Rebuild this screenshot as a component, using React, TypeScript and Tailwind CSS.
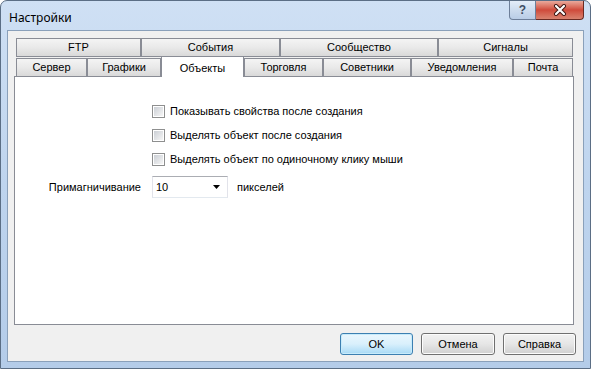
import React from 'react';

const rowOne = [
  { label: 'FTP', w: 'w-[125px]' },
  { label: 'События', w: 'w-[139px]' },
  { label: 'Сообщество', w: 'w-[158px]' },
  { label: 'Сигналы', w: 'w-[135px]' },
];

const rowTwo = [
  { label: 'Сервер', w: 'w-[71px]' },
  { label: 'Графики', w: 'w-[74px]' },
  { label: 'Объекты', w: 'w-[83px]', active: true },
  { label: 'Торговля', w: 'w-[79px]' },
  { label: 'Советники', w: 'w-[88px]' },
  { label: 'Уведомления', w: 'w-[102px]' },
  { label: 'Почта', w: 'w-[60px]' },
];

const options = [
  'Показывать свойства после создания',
  'Выделять объект после создания',
  'Выделять объект по одиночному клику мыши',
];

const Checkbox: React.FC = () => (
  <div className="w-[13px] h-[13px] border border-[#8e8f8f] bg-white p-px">
    <div className="w-full h-full bg-gradient-to-br from-[#cbcfd5] to-[#f6f6f6]" />
  </div>
);

const App: React.FC = () => {
  return (
    <div
      className="w-[591px] h-[369px] overflow-hidden bg-white"
      style={{ fontFamily: '"Liberation Sans", Arial, sans-serif' }}
    >
      <div className="w-full h-full flex flex-col rounded-t-[7px] border border-[#5b6e85] bg-gradient-to-b from-[#cfe0f4] via-[#bed4ee] to-[#b4cce9]">
        {/* title bar */}
        <div className="h-[29px] flex items-start shrink-0">
          <div
            className="pl-[8px] pt-[8px] text-[12px] text-black"
            style={{ fontFamily: '"Noto Sans", "Liberation Sans", sans-serif' }}
          >
            Настройки
          </div>
          <div className="ml-auto mr-[6px] flex">
            <div className="w-[27px] h-[19px] flex items-center justify-center rounded-bl-[4px] border border-t-0 border-[#6d7f99] bg-gradient-to-b from-[#e4edf8] via-[#cddcee] to-[#b9cde6] text-[12px] font-bold text-[#3f4e63]">
              ?
            </div>
            <div className="w-[48px] h-[19px] flex items-center justify-center rounded-br-[4px] border border-l-0 border-t-0 border-[#6b2a22] bg-gradient-to-b from-[#e9a99c] via-[#cf4a3b] to-[#d8826f]">
              <svg width="14" height="12" viewBox="0 0 14 12">
                <path d="M3 2 L11 10 M11 2 L3 10" stroke="#3a1410" strokeWidth="4" strokeLinecap="round" />
                <path d="M3 2 L11 10 M11 2 L3 10" stroke="#ffffff" strokeWidth="2.2" strokeLinecap="round" />
              </svg>
            </div>
          </div>
        </div>

        {/* client area */}
        <div className="mx-[6px] h-[332px] border border-[#8aa0ba] bg-[#f0f0f0] flex flex-col pl-[6px] pt-[7px]">
          <div className="ml-[2px] flex h-[19px]">
            {rowOne.map((t) => (
              <div
                key={t.label}
                className={`${t.w} h-[19px] border border-[#898c95] bg-gradient-to-b from-[#f4f4f4] via-[#e9e9e9] to-[#d9d9d9] flex items-center justify-center text-[11px] text-black`}
              >
                {t.label}
              </div>
            ))}
          </div>
          <div className="ml-[2px] mt-px flex items-end h-[18px]">
            {rowTwo.map((t) =>
              t.active ? (
                <div
                  key={t.label}
                  className={`${t.w} h-[21px] -mb-px relative z-10 border border-b-0 border-[#898c95] bg-white flex items-start justify-center pt-[3px] text-[11px] text-black`}
                >
                  {t.label}
                </div>
              ) : (
                <div
                  key={t.label}
                  className={`${t.w} h-[18px] border border-b-0 border-[#898c95] bg-gradient-to-b from-[#f4f4f4] via-[#e9e9e9] to-[#d9d9d9] flex items-center justify-center text-[11px] text-black`}
                >
                  {t.label}
                </div>
              )
            )}
          </div>

          {/* tab panel */}
          <div className="w-[560px] h-[249px] border border-[#898c95] bg-white flex flex-col pt-[26px]">
            <div className="pl-[137px] flex flex-col gap-[8px]">
              {options.map((o) => (
                <div key={o} className="h-[16px] flex items-center">
                  <Checkbox />
                  <span className="ml-[5px] text-[11px] text-black">{o}</span>
                </div>
              ))}
            </div>
            <div className="mt-[9px] flex items-center h-[22px]">
              <div className="w-[126px] text-right text-[11px] text-black">Примагничивание</div>
              <div className="ml-[11px] w-[76px] h-[22px] border border-[#abadb3] border-l-[#e2e3ea] border-r-[#e2e3ea] border-b-[#e3e9ef] bg-white flex items-center pl-[3px] pr-[7px] text-[11px] text-black">
                <span>10</span>
                <svg className="ml-auto" width="7" height="4" viewBox="0 0 7 4">
                  <path d="M0 0 H7 L3.5 4 Z" fill="#000" />
                </svg>
              </div>
              <span className="ml-[9px] text-[11px] text-black">пикселей</span>
            </div>
          </div>

          {/* buttons */}
          <div className="mt-[8px] pr-[7px] flex justify-end gap-[8px]">
            <div className="w-[73px] h-[22px] rounded-[3px] border border-[#3c7fb1] bg-gradient-to-b from-[#eaf6fd] via-[#d9f0fc] to-[#a7d9f5] flex items-center justify-center text-[11px] text-black shadow-[inset_0_0_0_1px_#c7ebfb]">
              OK
            </div>
            <div className="w-[74px] h-[22px] rounded-[3px] border border-[#707070] bg-gradient-to-b from-[#f2f2f2] via-[#e6e6e6] to-[#d0d0d0] flex items-center justify-center text-[11px] text-black shadow-[inset_0_0_0_1px_#fcfcfc]">
              Отмена
            </div>
            <div className="w-[73px] h-[22px] rounded-[3px] border border-[#707070] bg-gradient-to-b from-[#f2f2f2] via-[#e6e6e6] to-[#d0d0d0] flex items-center justify-center text-[11px] text-black shadow-[inset_0_0_0_1px_#fcfcfc]">
              Справка
            </div>
          </div>
        </div>
      </div>
    </div>
  );
};

export default App;
